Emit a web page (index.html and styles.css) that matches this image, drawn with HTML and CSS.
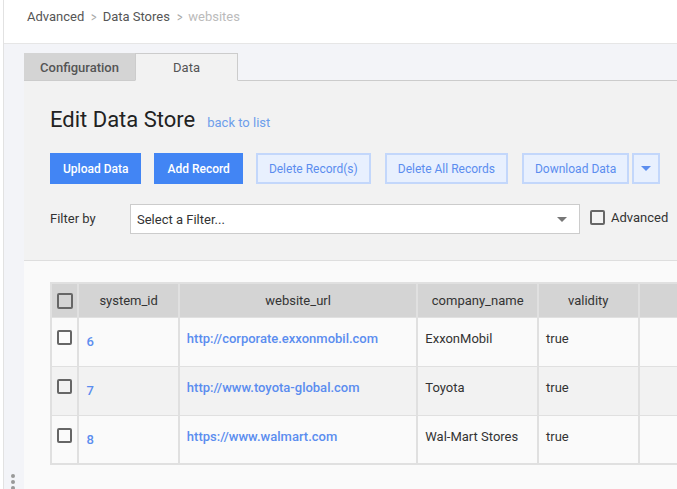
FILE: index.html
```html
<!DOCTYPE html>
<html lang="en">
<head>
    <meta charset="UTF-8">
    <meta name="viewport" content="width=device-width, initial-scale=1.0">
    <title>Edit Data Store</title>
    <link rel="stylesheet" href="styles.css">
</head>
<body>
    <div class="rail"></div>
    <div class="main">
        <div class="header">
            <span class="crumb">Advanced</span>
            <span class="sep">&gt;</span>
            <span class="crumb">Data Stores</span>
            <span class="sep">&gt;</span>
            <span class="crumb current">websites</span>
        </div>
        <div class="workspace">
            <div class="side-dots"><i></i><i></i><i></i></div>
            <div class="tabs">
                <div class="tab">Configuration</div>
                <div class="tab active">Data</div>
                <div class="tab-fill"></div>
            </div>
            <div class="panel">
                <div class="panel-top">
                    <div class="title-row">
                        <h1>Edit Data Store</h1>
                        <a href="#" class="back-link">back to list</a>
                    </div>
                    <div class="toolbar">
                        <button class="btn primary">Upload Data</button>
                        <button class="btn primary">Add Record</button>
                        <button class="btn light">Delete Record(s)</button>
                        <button class="btn light">Delete All Records</button>
                        <div class="split">
                            <button class="btn light">Download Data</button>
                            <button class="btn light caret-btn"><span class="caret"></span></button>
                        </div>
                    </div>
                    <div class="filter-row">
                        <label class="filter-label">Filter by</label>
                        <div class="select">
                            <span>Select a Filter...</span>
                            <span class="select-caret"></span>
                        </div>
                        <label class="check-label"><span class="box"></span>Advanced</label>
                    </div>
                </div>
                <div class="panel-body">
                    <table class="grid">
                        <thead>
                            <tr>
                                <th class="col-check"><span class="box"></span></th>
                                <th class="col-id">system_id</th>
                                <th class="col-url">website_url</th>
                                <th class="col-name">company_name</th>
                                <th class="col-valid">validity</th>
                                <th class="col-extra"></th>
                            </tr>
                        </thead>
                        <tbody>
                            <tr>
                                <td class="col-check"><span class="box"></span></td>
                                <td><a href="#" class="id-link">6</a></td>
                                <td><a href="#">http://corporate.exxonmobil.com</a></td>
                                <td>ExxonMobil</td>
                                <td>true</td>
                                <td></td>
                            </tr>
                            <tr class="alt">
                                <td class="col-check"><span class="box"></span></td>
                                <td><a href="#" class="id-link">7</a></td>
                                <td><a href="#">http://www.toyota-global.com</a></td>
                                <td>Toyota</td>
                                <td>true</td>
                                <td></td>
                            </tr>
                            <tr>
                                <td class="col-check"><span class="box"></span></td>
                                <td><a href="#" class="id-link">8</a></td>
                                <td><a href="#">https://www.walmart.com</a></td>
                                <td>Wal-Mart Stores</td>
                                <td>true</td>
                                <td></td>
                            </tr>
                        </tbody>
                    </table>
                </div>
            </div>
        </div>
    </div>
</body>
</html>
```

FILE: styles.css
```css
body {
    font-family: Roboto, 'Liberation Sans', Arial, sans-serif;
    margin: 0;
    display: flex;
    height: 100vh;
    overflow: hidden;
    background-color: #ffffff;
    color: #333;
}

.rail {
    width: 3px;
    flex: none;
    background: #ffffff;
    border-right: 1px solid #e2e2e2;
}

.main {
    flex: 1;
    display: flex;
    flex-direction: column;
    min-width: 0;
}

.header {
    height: 44px;
    flex: none;
    box-sizing: border-box;
    border-bottom: 1px solid #e6e6e6;
    padding: 9px 0 0 23px;
    font-size: 13px;
    display: flex;
    align-items: flex-start;
    line-height: 16px;
}

.crumb {
    color: #555;
}

.crumb.current {
    color: #bbbbbb;
}

.sep {
    color: #aaa;
    margin: 0 5px 0 6px;
    font-size: 14px;
    transform: scaleX(0.75);
    display: inline-block;
}

.workspace {
    flex: 1;
    background: #f3f4f8;
    padding: 9px 0 0 20px;
    position: relative;
    display: flex;
    flex-direction: column;
    min-height: 0;
}

.side-dots {
    position: absolute;
    left: 7px;
    top: 430px;
    display: flex;
    flex-direction: column;
    gap: 2px;
}

.side-dots i {
    width: 4px;
    height: 4px;
    border-radius: 50%;
    background: #999;
}

.tabs {
    display: flex;
    height: 28px;
    flex: none;
}

.tab {
    font-size: 13px;
    font-weight: 500;
    color: #555;
    background: #d4d4d4;
    width: 111px;
    box-sizing: border-box;
    display: flex;
    align-items: center;
    justify-content: center;
    border-top: 1px solid #d4d4d4;
    border-bottom: 1px solid #cccccc;
}

.tab.active {
    background: #f2f2f2;
    width: 103px;
    border: 1px solid #cccccc;
    border-bottom: 1px solid #f2f2f2;
    font-weight: 400;
}

.tab-fill {
    flex: 1;
    border-bottom: 1px solid #cccccc;
}

.panel {
    flex: 1;
    display: flex;
    flex-direction: column;
}

.panel-top {
    background: #f2f2f2;
    padding: 26px 0 0 26px;
    height: 180px;
    box-sizing: border-box;
    border-bottom: 1px solid #dedede;
    white-space: nowrap;
}

.title-row {
    display: flex;
    align-items: baseline;
    gap: 12px;
}

h1 {
    margin: 0;
    font-size: 22px;
    font-weight: 400;
    color: #222;
    line-height: 26px;
}

.back-link {
    font-size: 13px;
    color: #6d9eeb;
    text-decoration: none;
}

.toolbar {
    display: flex;
    margin-top: 20px;
    gap: 13px;
}

.btn {
    font-family: inherit;
    font-size: 12px;
    font-weight: 500;
    height: 31px;
    padding: 0 12px;
    border-radius: 0;
    cursor: pointer;
}

.btn.primary {
    background: #4285f4;
    color: #ffffff;
    border: none;
    padding: 0 13px;
}

.btn.light {
    background: #e8f0fe;
    color: #5b8def;
    border: 2px solid #c3d7fb;
    font-weight: 400;
    padding: 0 11px;
}

.toolbar .btn.light:nth-child(4) {
    margin-left: 1px;
}

.split {
    display: flex;
    gap: 3px;
    margin-left: 1px;
}

.btn.caret-btn {
    width: 28px;
    padding: 0;
    display: flex;
    align-items: center;
    justify-content: center;
}

.caret {
    width: 0;
    height: 0;
    border-left: 5px solid transparent;
    border-right: 5px solid transparent;
    border-top: 5px solid #5b8def;
}

.filter-row {
    display: flex;
    align-items: center;
    margin-top: 20px;
}

.filter-label {
    font-size: 13px;
    color: #333;
    width: 80px;
    margin-top: -2px;
}

.select {
    width: 450px;
    height: 30px;
    box-sizing: border-box;
    background: #ffffff;
    border: 1px solid #cccccc;
    display: flex;
    align-items: center;
    justify-content: space-between;
    padding: 0 12px 0 6px;
    font-size: 13px;
    color: #333;
}

.select-caret {
    width: 0;
    height: 0;
    border-left: 5px solid transparent;
    border-right: 5px solid transparent;
    border-top: 5px solid #777;
}

.check-label {
    display: flex;
    align-items: center;
    font-size: 13px;
    color: #333;
    margin-left: 10px;
    gap: 6px;
    margin-top: -4px;
}

.box {
    display: inline-block;
    width: 15px;
    height: 15px;
    box-sizing: border-box;
    border: 2px solid #666;
    border-radius: 2px;
    background: transparent;
}

.panel-body {
    flex: 1;
    background: #fafafa;
    padding: 21px 0 0 26px;
}

.grid {
    border-collapse: collapse;
    table-layout: fixed;
    width: 691px;
    font-size: 13px;
    border: 2px solid #e0e0e0;
}

.grid th {
    background: #d4d4d4;
    height: 34px;
    box-sizing: border-box;
    font-weight: 400;
    color: #333;
    text-align: center;
    border-left: 2px solid #e0e0e0;
    border-right: 2px solid #e0e0e0;
    padding: 0;
}

.grid td {
    height: 49px;
    box-sizing: border-box;
    border: 1px solid #e0e0e0;
    border-width: 1px 2px;
    padding: 13px 7px 0;
    line-height: 16px;
    vertical-align: top;
    color: #333;
    background: #fafafa;
}

.grid tr.alt td {
    background: #f2f2f2;
}

.grid td a {
    color: #5b8def;
    text-decoration: none;
    font-weight: 500;
}

.grid td a.id-link {
    display: inline-block;
    padding-top: 3px;
}

.grid .col-check {
    width: 27px;
    padding: 0;
    text-align: center;
}

.grid td.col-check {
    padding-top: 12px;
}

.grid th.col-check .box {
    vertical-align: middle;
    width: 16px;
    height: 16px;
}

.col-id {
    width: 99px;
}

.col-url {
    width: 235px;
}

.col-name {
    width: 119px;
}

.col-valid {
    width: 99px;
}

.col-extra {
    width: 100px;
}
```
